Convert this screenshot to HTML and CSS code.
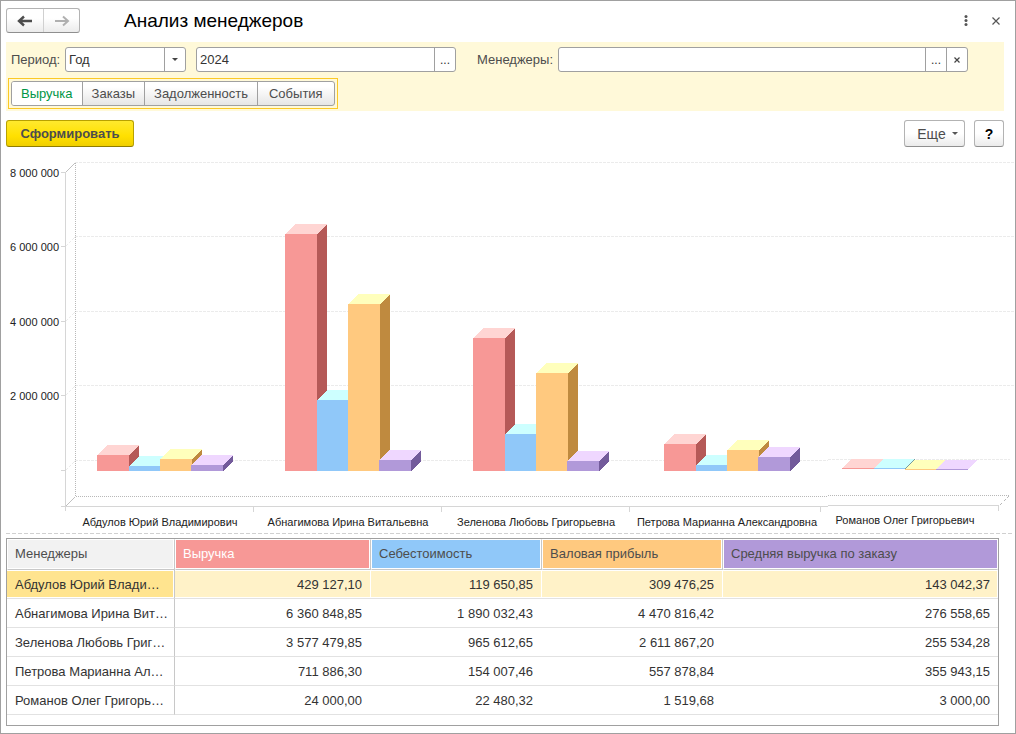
FILE: index.html
```html
<!DOCTYPE html>
<html lang="ru">
<head>
<meta charset="utf-8">
<title>Анализ менеджеров</title>
<link rel="stylesheet" href="styles.css">
</head>
<body>
<main class="window">
  <header class="titlebar">
    <div class="history">
      <button type="button" class="history-btn" aria-label="Назад">
        <svg width="16" height="12" viewBox="0 0 16 12"><path d="M2 6H15M7 1.5L2 6l5 4.500" fill="none" stroke="#4d4d4d" stroke-width="2.400"/></svg>
      </button>
      <button type="button" class="history-btn" aria-label="Вперед">
        <svg width="16" height="12" viewBox="0 0 16 12"><path d="M1 6H14M9 1.500L14 6l-5 4.500" fill="none" stroke="#b0b0b0" stroke-width="2"/></svg>
      </button>
    </div>
    <h1 class="title">Анализ менеджеров</h1>
    <button type="button" class="icon-btn" aria-label="Меню">
      <svg width="4" height="12" viewBox="0 0 4 12" fill="#555"><circle cx="2" cy="1.500" r="1.500"/><circle cx="2" cy="5.500" r="1.500"/><circle cx="2" cy="9.500" r="1.500"/></svg>
    </button>
    <button type="button" class="icon-btn" aria-label="Закрыть">
      <svg width="8" height="8" viewBox="0 0 8 8"><path d="M.5.5l7 7M7.500.5l-7 7" stroke="#555" stroke-width="1.200"/></svg>
    </button>
  </header>

  <section class="filters">
    <div class="filter-row">
      <label class="label" for="period">Период:</label>
      <div class="field field-kind">
        <select id="period" class="input"><option>Год</option></select>
        <span class="field-btn" aria-hidden="true"><svg width="6" height="3" viewBox="0 0 6 3"><path d="M0 0h6L3 3z" fill="#444"/></svg></span>
      </div>
      <div class="field field-year">
        <input class="input" type="text" value="2024" aria-label="Год">
        <button type="button" class="field-btn dots">...</button>
      </div>
      <label class="label label-managers" for="managers">Менеджеры:</label>
      <div class="field field-managers">
        <input id="managers" class="input" type="text">
        <button type="button" class="field-btn dots">...</button>
        <button type="button" class="field-btn" aria-label="Очистить"><svg width="6" height="6" viewBox="0 0 6 6"><path d="M.5.5l5 5M5.500.5l-5 5" stroke="#444" stroke-width="1.200"/></svg></button>
      </div>
    </div>
    <div class="tabs-frame">
      <nav class="tabs">
        <button type="button" class="tab active">Выручка</button>
        <button type="button" class="tab">Заказы</button>
        <button type="button" class="tab">Задолженность</button>
        <button type="button" class="tab">События</button>
      </nav>
    </div>
  </section>

  <div class="toolbar">
    <button type="button" class="btn btn-primary">Сформировать</button>
    <button type="button" class="btn btn-more">Еще <svg width="6" height="3" viewBox="0 0 6 3"><path d="M0 0h6L3 3z" fill="#555"/></svg></button>
    <button type="button" class="btn btn-help">?</button>
  </div>

  <svg class="chart" viewBox="1 155 1014 377" role="img" aria-label="Показатели менеджеров">
    <g class="grid">
      <path d="M75 162.500H1014M75 236.500H1014M75 311.500H1014M75 385.500H1014M75 460.500H828M828 459.500H1010"/>
      <path d="M66 246l9-9M66 321l9-9M66 395l9-9M66 470l9-9"/>
    </g>
    <path class="wall" d="M75.500 163V496M76 496.500H828M828 495.500H1009M1009 496l-10 10"/>
    <path class="edge" d="M66 172l9-9M66 506l9-9"/>
    <path class="axis" d="M65.500 172V511M61 172.500h5M61 246.500h5M61 321.500h5M61 395.500h5M61 470.500h5M61 506.500H828M828 505.500H999M253.500 507v5M441.500 507v5M629.500 507v5M820.500 507v5M998.500 506v5"/>

    <g class="red"><path class="front" d="M97 455h32v16H97z"/><path class="top" d="M97 455l10-10h32l-10 10z"/><path class="side" d="M129 455l10-10v16l-10 10z"/></g>
    <g class="blue"><path class="front" d="M129 466h31v5h-31z"/><path class="top" d="M129 466l10-10h31l-10 10z"/></g>
    <g class="orange"><path class="front" d="M160 459h32v12h-32z"/><path class="top" d="M160 459l10-10h32l-10 10z"/><path class="side" d="M192 459l10-10v12l-10 10z"/></g>
    <g class="purple"><path class="front" d="M191 465h32v6h-32z"/><path class="top" d="M191 465l10-10h32l-10 10z"/><path class="side" d="M223 465l10-10v6l-10 10z"/></g>

    <g class="red"><path class="front" d="M285 234h32v237h-32z"/><path class="top" d="M285 234l10-10h32l-10 10z"/><path class="side" d="M317 234l10-10v237l-10 10z"/></g>
    <g class="blue"><path class="front" d="M317 400h31v71h-31z"/><path class="top" d="M317 400l10-10h31l-10 10z"/></g>
    <g class="orange"><path class="front" d="M348 304h32v167h-32z"/><path class="top" d="M348 304l10-10h32l-10 10z"/><path class="side" d="M380 304l10-10v167l-10 10z"/></g>
    <g class="purple"><path class="front" d="M379 460h32v11h-32z"/><path class="top" d="M379 460l10-10h32l-10 10z"/><path class="side" d="M411 460l10-10v11l-10 10z"/></g>

    <g class="red"><path class="front" d="M473 338h32v133h-32z"/><path class="top" d="M473 338l10-10h32l-10 10z"/><path class="side" d="M505 338l10-10v133l-10 10z"/></g>
    <g class="blue"><path class="front" d="M505 434h31v37h-31z"/><path class="top" d="M505 434l10-10h31l-10 10z"/></g>
    <g class="orange"><path class="front" d="M536 373h32v98h-32z"/><path class="top" d="M536 373l10-10h32l-10 10z"/><path class="side" d="M568 373l10-10v98l-10 10z"/></g>
    <g class="purple"><path class="front" d="M567 461h32v10h-32z"/><path class="top" d="M567 461l10-10h32l-10 10z"/><path class="side" d="M599 461l10-10v10l-10 10z"/></g>

    <g class="red"><path class="front" d="M664 444h32v27h-32z"/><path class="top" d="M664 444l10-10h32l-10 10z"/><path class="side" d="M696 444l10-10v27l-10 10z"/></g>
    <g class="blue"><path class="front" d="M696 465h31v6h-31z"/><path class="top" d="M696 465l10-10h31l-10 10z"/></g>
    <g class="orange"><path class="front" d="M727 450h32v21h-32z"/><path class="top" d="M727 450l10-10h32l-10 10z"/><path class="side" d="M759 450l10-10v21l-10 10z"/></g>
    <g class="purple"><path class="front" d="M758 457h32v14h-32z"/><path class="top" d="M758 457l10-10h32l-10 10z"/><path class="side" d="M790 457l10-10v14l-10 10z"/></g>

    <g class="red"><path class="front" d="M842 468h32v1h-32z"/><path class="top" d="M842 468l10-9h32l-10 9z"/></g>
    <g class="blue"><path class="front" d="M874 468h32v1h-32z"/><path class="top" d="M874 468l10-9h31l-10 9z"/></g>
    <path d="M905 469l10-10" stroke="#7a9c9c"/>
    <g class="orange"><path class="front" d="M905 469h32v1h-32z"/><path class="top" d="M905 469l10-9h32l-10 9z"/></g>
    <g class="purple"><path class="front" d="M936 469h32v1h-32z"/><path class="top" d="M936 469l10-9h32l-10 9z"/></g>

    <g class="chart-text" text-anchor="end">
      <text x="59" y="177">8 000 000</text>
      <text x="59" y="251">6 000 000</text>
      <text x="59" y="326">4 000 000</text>
      <text x="59" y="400">2 000 000</text>
    </g>
    <g class="chart-text" text-anchor="middle">
      <text x="160" y="526">Абдулов Юрий Владимирович</text>
      <text x="348" y="526">Абнагимова Ирина Витальевна</text>
      <text x="536" y="526">Зеленова Любовь Григорьевна</text>
      <text x="727" y="526">Петрова Марианна Александровна</text>
      <text x="905" y="524">Романов Олег Григорьевич</text>
    </g>
  </svg>

  <svg class="splitter" height="1" aria-hidden="true"><path d="M0 .5H4000" stroke="#d0d0d0" stroke-dasharray="4 2"/></svg>

  <div class="grid-box">
    <table class="table">
      <colgroup><col class="c-name"><col class="c-rev"><col class="c-cost"><col class="c-gross"><col></colgroup>
      <thead>
        <tr><th class="h-name">Менеджеры</th><th class="h-rev">Выручка</th><th class="h-cost">Себестоимость</th><th class="h-gross">Валовая прибыль</th><th class="h-avg">Средняя выручка по заказу</th></tr>
      </thead>
      <tbody>
        <tr class="selected"><td>Абдулов Юрий Влади…</td><td>429 127,10</td><td>119 650,85</td><td>309 476,25</td><td>143 042,37</td></tr>
        <tr><td>Абнагимова Ирина Вит…</td><td>6 360 848,85</td><td>1 890 032,43</td><td>4 470 816,42</td><td>276 558,65</td></tr>
        <tr><td>Зеленова Любовь Григ…</td><td>3 577 479,85</td><td>965 612,65</td><td>2 611 867,20</td><td>255 534,28</td></tr>
        <tr><td>Петрова Марианна Ал…</td><td>711 886,30</td><td>154 007,46</td><td>557 878,84</td><td>355 943,15</td></tr>
        <tr><td>Романов Олег Григорь…</td><td>24 000,00</td><td>22 480,32</td><td>1 519,68</td><td>3 000,00</td></tr>
      </tbody>
    </table>
  </div>
</main>
</body>
</html>
```
FILE: styles.css
```css
* { box-sizing: border-box; }

body {
  margin: 0;
  background: #fff;
  color: #333;
  font: 13px/16px "Liberation Sans", Arial, sans-serif;
}

button, input, select {
  margin: 0;
  padding: 0;
  border: 0;
  background: none;
  color: inherit;
  font: inherit;
}

svg { display: block; }

.window {
  display: flex;
  flex-direction: column;
  min-height: 100vh;
  border: 1px solid #a0a0a0;
}

/* Title bar */
.titlebar {
  display: flex;
  align-items: center;
  height: 41px;
  padding: 0 11px 2px 5px;
}

.history {
  display: flex;
  height: 25px;
  border: 1px solid #b3b3b3;
  border-bottom-color: #8f8f8f;
  border-radius: 3px;
  background: linear-gradient(#fff 40%, #ebebeb);
}

.history-btn {
  display: grid;
  place-items: center;
  width: 36px;
}

.history-btn + .history-btn { border-left: 1px solid #d0d0d0; }

.title {
  flex: 1;
  margin: 0 0 0 44px;
  color: #000;
  font-size: 19px;
  font-weight: 400;
  line-height: 24px;
}

.icon-btn {
  display: grid;
  place-items: center;
  width: 16px;
  height: 16px;
}

.icon-btn + .icon-btn { margin-left: 14px; }

/* Filters */
.filters {
  margin: 0 11px 0 5px;
  padding: 5px 36px 2px 2px;
  background: #fff9d9;
}

.filter-row {
  display: flex;
  align-items: center;
  padding-left: 3px;
}

.label { color: #4d4d4d; width: 54px; }
.label-managers { width: 81px; margin-left: 21px; }

.field {
  display: flex;
  height: 25px;
  border: 1px solid #a0a0a0;
  border-radius: 3px;
  background: #fff;
}

.field-kind { width: 121px; }
.field-year { width: 260px; margin-left: 10px; }
.field-managers { flex: 1; }

.input {
  flex: 1;
  min-width: 0;
  padding: 0 3px;
  appearance: none;
  outline: 0;
}

.field-btn {
  display: grid;
  place-items: center;
  width: 21px;
  border-left: 1px solid #a0a0a0;
}

.dots { font-size: 12px; }

.tabs-frame {
  width: fit-content;
  margin-top: 6px;
  padding: 2px;
  border: 1px solid #fbc926;
}

.tabs {
  display: flex;
  height: 25px;
  border: 1px solid #a0a0a0;
  border-radius: 3px;
  background: linear-gradient(#fff 20%, #e6e6e6);
  overflow: hidden;
}

.tab { padding: 0 9px; color: #4d4d4d; }
.tab + .tab { border-left: 1px solid #a0a0a0; }
.tab:last-child { padding: 0 11px; }
.tab.active { background: #fff; color: #009646; }

/* Toolbar */
.toolbar {
  display: flex;
  gap: 9px;
  padding: 9px 11px 8px 5px;
}

.btn {
  display: flex;
  align-items: center;
  justify-content: center;
  height: 27px;
  border: 1px solid #b3b3b3;
  border-bottom-color: #8f8f8f;
  border-radius: 3px;
  background: linear-gradient(#fff 50%, #ebebeb);
  color: #4d4d4d;
}

.btn-primary {
  width: 128px;
  margin-right: auto;
  border-color: #b8a100;
  border-bottom-color: #8f7d00;
  background: linear-gradient(#ffe92e, #ffe000 60%, #f0cf00);
  font-weight: 700;
}

.btn-more { gap: 6px; width: 61px; padding-left: 6px; font-size: 14px; }
.btn-help { width: 30px; color: #000; font-size: 14px; font-weight: 700; }

/* Chart */
.chart { width: 100%; height: auto; }
.chart path { shape-rendering: crispEdges; }
.grid path { fill: none; stroke: #ebebeb; stroke-dasharray: 3 1; }
.wall { fill: none; stroke: #b8b8b8; stroke-dasharray: 1 1; }
.edge { fill: none; stroke: #c0c0c0; }
.axis { fill: none; stroke: #d6d6d6; }
.chart-text { fill: #222; font-size: 11px; }

.red .front { fill: #f79896; }
.red .top { fill: #ffd5d3; }
.red .side { fill: #b55957; }
.blue .front { fill: #90c8f9; }
.blue .top { fill: #cdffff; }
.orange .front { fill: #ffc97f; }
.orange .top { fill: #ffffbc; }
.orange .side { fill: #bf8a3f; }
.purple .front { fill: #b199d9; }
.purple .top { fill: #efd7ff; }
.purple .side { fill: #735b9b; }

.splitter { width: calc(100% - 7px); margin: 1px 0 4px 5px; }

/* Results table */
.grid-box {
  flex: 1;
  margin: 0 16px 7px 5px;
  border: 1px solid #a0a0a0;
}

.table {
  width: 100%;
  border-collapse: separate;
  border-spacing: 0;
  table-layout: fixed;
}

.c-name { width: 168px; }
.c-rev { width: 196px; }
.c-cost { width: 171px; }
.c-gross { width: 181px; }

.table th {
  height: 31px;
  padding: 0 7px 2px;
  border: 1px solid #fff;
  border-right-color: #c8c8c8;
  border-bottom-color: #c8c8c8;
  box-shadow: inset -1px -1px #fff;
  color: #4d4d4d;
  font-weight: 400;
  text-align: left;
}

.table th:last-child { border-right-color: #fff; box-shadow: inset 0 -1px #fff; }
.h-name { background: #f2f2f2; }
.table .h-rev { background: #f79896; color: #fff; }
.h-cost { background: #90c8f9; }
.h-gross { background: #ffc97f; }
.h-avg { background: #b199d9; }

.table td {
  height: 29px;
  padding: 2px 9px 0 8px;
  border-bottom: 1px solid #e2e2e2;
  text-align: right;
  white-space: nowrap;
}

.table td:first-child {
  border-right: 1px solid #c8c8c8;
  text-align: left;
}

.table td:last-child { padding-right: 8px; }

.selected td { background: #fff2c8; box-shadow: inset 0 1px #fff, inset -1px -1px #fff; }
.selected td:first-child { background: #ffe48f; }
```
